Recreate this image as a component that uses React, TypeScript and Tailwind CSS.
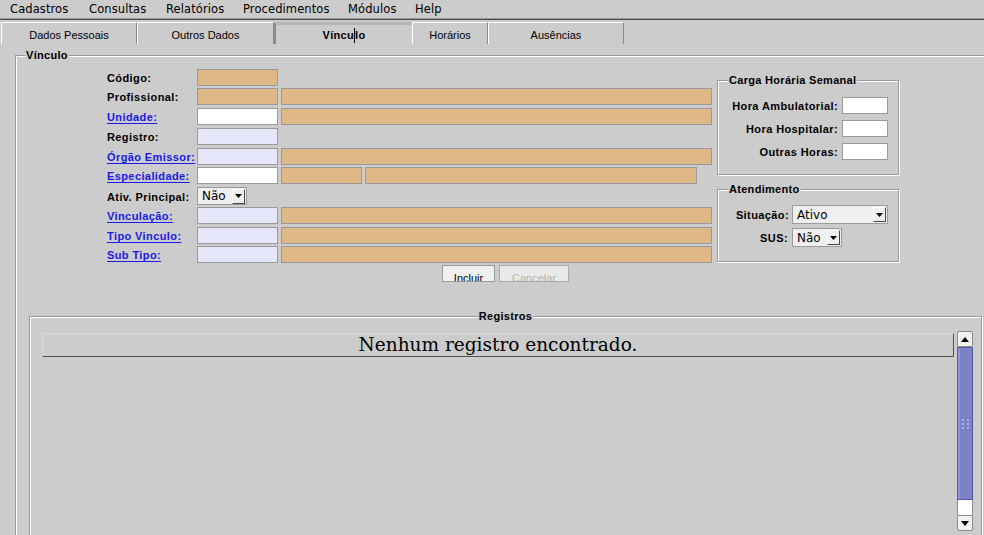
import type { ReactNode } from 'react'

const sans = "font-['Liberation_Sans',Arial,sans-serif]"
const dejavu = "font-['DejaVu_Sans',Verdana,sans-serif]"

const menus = [
  { label: 'Cadastros', w: 'w-[79px]' },
  { label: 'Consultas', w: 'w-[77px]' },
  { label: 'Relatórios', w: 'w-[77px]' },
  { label: 'Procedimentos', w: 'w-[105px]' },
  { label: 'Módulos', w: 'w-[67px]' },
  { label: 'Help', w: 'w-[60px]' },
]

const TAN = 'bg-[#deb887]'
const LAV = 'bg-[#e6e6fa]'
const WHITE = 'bg-white'

function Box({ w, bg }: { w: string; bg: string }) {
  return <div className={`h-[17px] shrink-0 border border-[#9a9a9a] ${w} ${bg}`} />
}

function Arrow({ h }: { h: string }) {
  return (
    <div
      className={`flex w-[13px] shrink-0 items-center justify-center border-t border-l border-white border-r border-b border-r-[#444] border-b-[#444] bg-[#eeeeee] ${h}`}
    >
      <svg width="7" height="4" viewBox="0 0 7 4">
        <path d="M0 0h7L3.5 4z" fill="#000" />
      </svg>
    </div>
  )
}

function Combo({ value, w }: { value: string; w: string }) {
  return (
    <div className={`flex h-[19px] items-center border border-[#9a9a9a] bg-[#efefef] pr-px ${w}`}>
      <span className={`flex-1 pl-[4px] text-[12px] leading-[14px] text-black ${dejavu}`}>{value}</span>
      <Arrow h="h-[15px]" />
    </div>
  )
}

function Etched({
  title,
  className,
  legend,
  children,
}: {
  title: string
  className: string
  legend: string
  children?: ReactNode
}) {
  return (
    <div
      className={`relative border border-[#999] shadow-[inset_1px_1px_0_#fff,1px_1px_0_#fff] ${className}`}
    >
      <span
        className={`absolute -top-[7px] bg-[#cccccc] px-px text-[11px] leading-[13px] font-bold tracking-[0.3px] text-black ${legend}`}
      >
        {title}
      </span>
      {children}
    </div>
  )
}

function Label({ text, link }: { text: string; link?: boolean }) {
  return (
    <span
      className={`w-[90px] shrink-0 pt-[2px] text-[11px] leading-[13px] font-bold tracking-[0.4px] whitespace-nowrap ${
        link ? 'text-[#1a1ae8] underline underline-offset-[2px]' : 'text-black'
      }`}
    >
      {text}
    </span>
  )
}

const rows: { label: string; link?: boolean; h: string; boxes: { w: string; bg: string }[] }[] = [
  { label: 'Código:', h: 'h-[19px]', boxes: [{ w: 'w-[81px]', bg: TAN }] },
  { label: 'Profissional:', h: 'h-[20px]', boxes: [{ w: 'w-[81px]', bg: TAN }, { w: 'w-[431px]', bg: TAN }] },
  { label: 'Unidade:', link: true, h: 'h-[20px]', boxes: [{ w: 'w-[81px]', bg: WHITE }, { w: 'w-[431px]', bg: TAN }] },
  { label: 'Registro:', h: 'h-[20px]', boxes: [{ w: 'w-[81px]', bg: LAV }] },
  { label: 'Órgão Emissor:', link: true, h: 'h-[19px]', boxes: [{ w: 'w-[81px]', bg: LAV }, { w: 'w-[431px]', bg: TAN }] },
  {
    label: 'Especialidade:',
    link: true,
    h: 'h-[20px]',
    boxes: [
      { w: 'w-[81px]', bg: WHITE },
      { w: 'w-[81px]', bg: TAN },
      { w: 'w-[332px]', bg: TAN },
    ],
  },
]

const rows2: { label: string; h: string }[] = [
  { label: 'Vinculação:', h: 'h-[20px]' },
  { label: 'Tipo Vinculo:', h: 'h-[19px]' },
  { label: 'Sub Tipo:', h: 'h-[17px]' },
]

export default function App() {
  return (
    <div className={`relative h-[535px] w-[984px] overflow-hidden bg-[#cccccc] text-black ${sans}`}>
      {/* menu bar */}
      <div className={`flex h-[18px] items-center text-[11.5px] leading-[14px] ${dejavu}`}>
        {menus.map((m) => (
          <span key={m.label} className={`pl-[10px] tracking-[0.1px] ${m.w}`}>
            {m.label}
          </span>
        ))}
      </div>
      <div className="h-px bg-[#9a9a9a]" />
      <div className="h-px bg-[#4a4a4a]" />

      {/* tabs */}
      <div className="mt-[2px] ml-px flex h-[22px] text-[11px]">
        <div className="flex w-[136px] items-center justify-center border-t border-l border-r border-white border-r-[#8a8a8a] pt-[3px]">
          Dados Pessoais
        </div>
        <div className="flex w-[137px] items-center justify-center border-t border-l border-r border-white border-r-[#8a8a8a] pt-[3px]">
          Outros Dados
        </div>
        <div className="flex w-[138px] items-center justify-center border-t-[3px] border-l-2 border-t-[#b6b6b6] border-l-[#8a8a8a] pt-[1px] font-bold tracking-[0.3px]">
          Víncu
          <span className="inline-block h-[15px] w-px bg-black" />
          lo
        </div>
        <div className="flex w-[76px] items-center justify-center border-t border-l border-r border-white border-r-[#8a8a8a] pt-[3px]">
          Horários
        </div>
        <div className="flex w-[136px] items-center justify-center border-t border-l border-r border-white border-r-[#8a8a8a] pt-[3px]">
          Ausências
        </div>
      </div>

      {/* Vínculo panel */}
      <Etched title="Vínculo" className="mt-[11px] ml-[15px] h-[520px] w-[981px]" legend="left-[9px]">
        <div className="flex">
          <div className="mt-[13px] ml-[91px] flex w-[604px] flex-col">
            {rows.map((r) => (
              <div key={r.label} className={`flex items-start ${r.h}`}>
                <div className="flex h-[17px] items-center">
                  <Label text={r.label} link={r.link} />
                </div>
                <div className="flex gap-[3px]">
                  {r.boxes.map((b, i) => (
                    <Box key={i} w={b.w} bg={b.bg} />
                  ))}
                </div>
              </div>
            ))}
            <div className="flex h-[20px] items-start">
              <div className="flex h-[18px] items-center">
                <Label text="Ativ. Principal:" />
              </div>
              <div className="flex h-[18px] w-[50px] items-center border border-[#9a9a9a] bg-[#efefef] pr-px">
                <span className={`flex-1 pl-[4px] text-[12px] leading-[14px] ${dejavu}`}>Não</span>
                <Arrow h="h-[15px]" />
              </div>
            </div>
            {rows2.map((r) => (
              <div key={r.label} className={`flex items-start ${r.h}`}>
                <div className="flex h-[17px] items-center">
                  <Label text={r.label} link />
                </div>
                <div className="flex gap-[3px]">
                  <Box w="w-[81px]" bg={LAV} />
                  <Box w="w-[431px]" bg={TAN} />
                </div>
              </div>
            ))}
          </div>

          <div className="mt-[24px] ml-[6px] flex flex-col gap-[14px]">
            <Etched title="Carga Horária Semanal" className="h-[95px] w-[182px]" legend="left-[10px]">
              <div className="flex flex-col items-end gap-[6px] pt-[16px] pr-[10px]">
                {['Hora Ambulatorial:', 'Hora Hospitalar:', 'Outras Horas:'].map((l) => (
                  <div key={l} className="flex items-center gap-[4px]">
                    <span className="pt-px text-[11px] leading-[13px] font-bold tracking-[0.4px] whitespace-nowrap">{l}</span>
                    <div className="h-[17px] w-[46px] border border-[#9a9a9a] bg-white" />
                  </div>
                ))}
              </div>
            </Etched>
            <Etched title="Atendimento" className="h-[73px] w-[182px]" legend="left-[10px]">
              <div className="flex flex-col gap-[4px] pt-[15px]">
                <div className="flex items-center">
                  <span className="w-[74px] pt-px pr-[3px] text-right text-[11px] leading-[13px] font-bold tracking-[0.4px]">
                    Situação:
                  </span>
                  <Combo value="Ativo" w="w-[96px]" />
                </div>
                <div className="flex items-center">
                  <span className="w-[74px] pt-px pr-[4px] text-right text-[11px] leading-[13px] font-bold tracking-[0.4px]">
                    SUS:
                  </span>
                  <Combo value="Não" w="w-[50px]" />
                </div>
              </div>
            </Etched>
          </div>
        </div>

        {/* buttons */}
        <div className="mt-[2px] flex justify-center gap-[4px]">
          <div className="h-[17px] w-[53px] overflow-hidden border border-[#9a9a9a] bg-[#efefef] pt-[6px] text-center text-[11px] leading-[13px]">
            Incluir
          </div>
          <div className="h-[17px] w-[70px] overflow-hidden border border-[#aaaaaa] bg-[#e9e9e9] pt-[6px] text-center text-[11px] leading-[13px] text-[#b0b0b0]">
            Cancelar
          </div>
        </div>

        {/* Registros */}
        <Etched
          title="Registros"
          className="mt-[34px] ml-[13px] h-[300px] w-[953px]"
          legend="left-1/2 -translate-x-1/2"
        >
          <div className="flex items-start">
            <div className="mt-[16px] ml-[12px] flex h-[24px] w-[912px] items-center justify-center border-t border-l border-[#dadada] border-r border-b border-r-[#505050] border-b-[#505050]">
              <span className="font-['DejaVu_Serif','Liberation_Serif',serif] text-[18.5px] leading-[22px]">
                Nenhum registro encontrado.
              </span>
            </div>
            <div className="mt-[14px] ml-[3px] flex w-[16px] flex-col">
              <div className="flex h-[16px] items-center justify-center rounded-[2px] border border-[#8a8a8a] bg-[#f2f2f2]">
                <svg width="8" height="5" viewBox="0 0 8 5">
                  <path d="M0 5h8L4 0z" fill="#000" />
                </svg>
              </div>
              <div className="flex h-[153px] items-center justify-center border border-[#555b9c] bg-[#7c82c8] shadow-[inset_2px_0_0_#9096d8]">
                <div className="grid grid-cols-2 gap-x-[3px] gap-y-[2px]">
                  {Array.from({ length: 6 }).map((_, i) => (
                    <span key={i} className="h-[2px] w-[2px] bg-[#aeb3ee]" />
                  ))}
                </div>
              </div>
              <div className="h-[15px] border-x border-[#8a8a8a] bg-white" />
              <div className="flex h-[16px] items-center justify-center rounded-[2px] border border-[#8a8a8a] bg-[#f2f2f2]">
                <svg width="8" height="5" viewBox="0 0 8 5">
                  <path d="M0 0h8L4 5z" fill="#000" />
                </svg>
              </div>
            </div>
          </div>
        </Etched>
      </Etched>
    </div>
  )
}
